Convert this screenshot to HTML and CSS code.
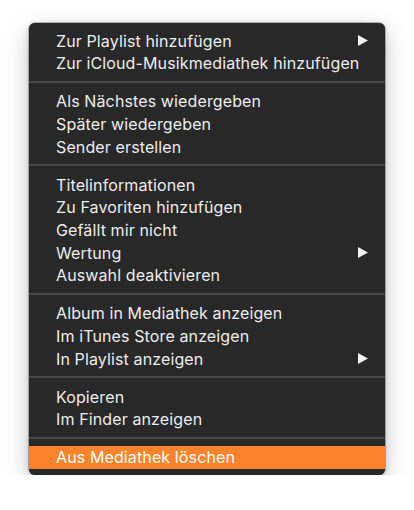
FILE: index.html
```html
<!DOCTYPE html>
<html lang="de">
<head>
<meta charset="utf-8">
<title>Kontextmenü</title>
<link rel="stylesheet" href="styles.css">
</head>
<body>
<div class="menu">
  <div class="item"><span>Zur Playlist hinzufügen</span><svg class="arrow" viewBox="0 0 10 11"><path d="M0 0 L10 5.5 L0 11 Z"/></svg></div>
  <div class="item"><span>Zur iCloud-Musikmediathek hinzufügen</span></div>
  <div class="sep"></div>
  <div class="item"><span>Als Nächstes wiedergeben</span></div>
  <div class="item"><span>Später wiedergeben</span></div>
  <div class="item"><span>Sender erstellen</span></div>
  <div class="sep"></div>
  <div class="item"><span>Titelinformationen</span></div>
  <div class="item"><span>Zu Favoriten hinzufügen</span></div>
  <div class="item"><span>Gefällt mir nicht</span></div>
  <div class="item"><span>Wertung</span><svg class="arrow" viewBox="0 0 10 11"><path d="M0 0 L10 5.5 L0 11 Z"/></svg></div>
  <div class="item"><span>Auswahl deaktivieren</span></div>
  <div class="sep"></div>
  <div class="item"><span>Album in Mediathek anzeigen</span></div>
  <div class="item"><span>Im iTunes Store anzeigen</span></div>
  <div class="item"><span>In Playlist anzeigen</span><svg class="arrow" viewBox="0 0 10 11"><path d="M0 0 L10 5.5 L0 11 Z"/></svg></div>
  <div class="sep"></div>
  <div class="item"><span>Kopieren</span></div>
  <div class="item"><span>Im Finder anzeigen</span></div>
  <div class="sep"></div>
  <div class="item active"><span>Aus Mediathek löschen</span></div>
</div>
</body>
</html>
```
FILE: styles.css
```css
html, body {
  margin: 0;
  padding: 0;
  background: #ffffff;
}
body {
  padding: 23px 0 0 29px;
  font-family: Inter, "Liberation Sans", Arial, sans-serif;
}
.menu {
  width: 356px;
  box-sizing: border-box;
  background: #282828;
  border-radius: 6px;
  padding: 6.5px 0 6px 0;
  display: flex;
  flex-direction: column;
  box-shadow: 0 0 0 0.5px rgba(0,0,0,0.5), 0 8px 24px rgba(0,0,0,0.22), 0 2px 6px rgba(0,0,0,0.15);
}
.item {
  height: 22.7px;
  line-height: 22.7px;
  font-size: 16px;
  letter-spacing: 0.12px;
  color: #ededed;
  padding: 0 17px 0 27px;
  display: flex;
  align-items: center;
  justify-content: space-between;
  white-space: nowrap;
}
.item.active {
  background: #f8832b;
  color: #ffffff;
}
.arrow {
  width: 10px;
  height: 11px;
  fill: #f2f2f2;
}
.sep {
  height: 2px;
  background: #474747;
  margin: 6px 0 7.3px 0;
}
```
